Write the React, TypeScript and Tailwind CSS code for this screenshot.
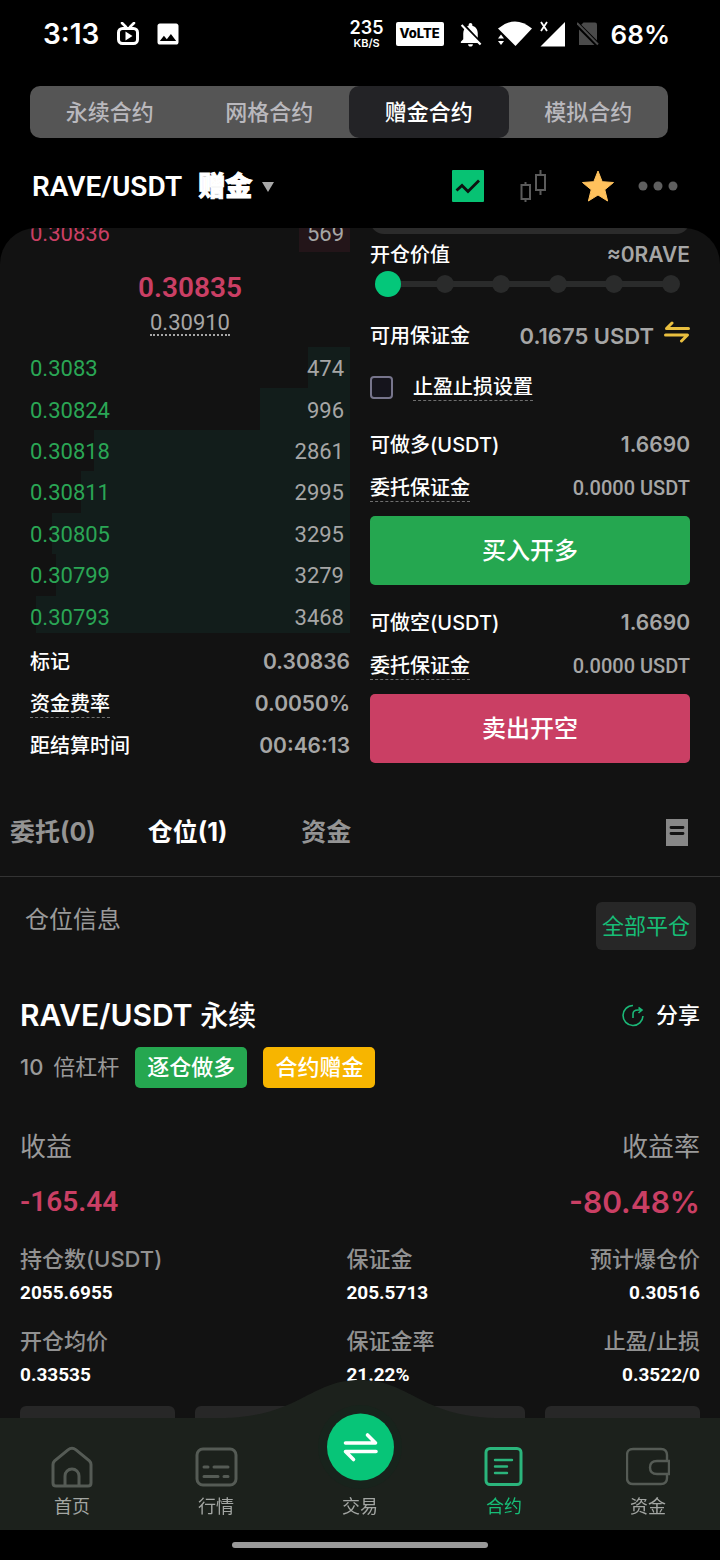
import { useState } from 'react';
import { clsx } from 'clsx';
import { MdImage, MdNotificationsOff } from 'react-icons/md';

const din = "[font-family:Roboto,'Noto_Sans_CJK_SC',sans-serif]";

const contractTypes = ['永续合约', '网格合约', '赠金合约', '模拟合约'];

const bids = [
  { price: '0.3083', amount: 474, depth: 13 },
  { price: '0.30824', amount: 996, depth: 28 },
  { price: '0.30818', amount: 2861, depth: 80 },
  { price: '0.30811', amount: 2995, depth: 84 },
  { price: '0.30805', amount: 3295, depth: 93 },
  { price: '0.30799', amount: 3279, depth: 92 },
  { price: '0.30793', amount: 3468, depth: 98 },
];

const positionDetails = [
  { label: '持仓数(USDT)', value: '2055.6955' },
  { label: '保证金', value: '205.5713' },
  { label: '预计爆仓价', value: '0.30516' },
  { label: '开仓均价', value: '0.33535' },
  { label: '保证金率', value: '21.22%' },
  { label: '止盈/止损', value: '0.3522/0' },
];

const positionActions = ['调整杠杆', '止盈止损', '平仓', '反手'];

const StatusBar = () => (
  <div className="flex h-[68px] shrink-0 items-center justify-between pr-[50px] pl-[43px] text-white">
    <div className="flex items-center gap-[18px]">
      <span className="text-[28px] font-semibold">3:13</span>
      <svg width="22" height="24" viewBox="0 0 22 24" fill="none">
        <rect x="1.5" y="6.5" width="19" height="15" rx="4" stroke="white" strokeWidth="3" />
        <path d="M5 1l4 4M17 1l-4 4" stroke="white" strokeWidth="2.6" strokeLinecap="round" />
        <path d="M8.5 9.5v9l7-4.5z" fill="white" />
      </svg>
      <MdImage className="-mx-[3px] size-[28px]" />
    </div>
    <div className="flex items-center gap-3">
      <div className="flex flex-col items-center">
        <span className="text-[18px] leading-[18px] font-semibold">235</span>
        <span className="text-[11px] leading-3 font-semibold">KB/S</span>
      </div>
      <span className="flex h-6 w-12 items-center justify-center rounded-[2px] bg-white text-[13px] font-extrabold text-black">
        VoLTE
      </span>
      <MdNotificationsOff className="size-[29px]" />
      <svg className="-mr-1" width="35" height="26" viewBox="0 0 35 26" fill="white">
        <path d="M1 7.500Q18-6.500 35 7.500L18.500 25z" />
        <path d="M1 17.500l3-4 3 4zM1 20l3 4 3-4z" />
      </svg>
      <svg width="25" height="26" viewBox="0 0 25 26">
        <path d="M25 1v24.500H0.500z" fill="white" />
        <path d="M1 1l6 9M7 1l-6 9" stroke="white" strokeWidth="1.800" />
      </svg>
      <svg width="22" height="26" viewBox="0 0 22 26">
        <path d="M6.500 1.500H18a2 2 0 0 1 2 2V24H2V6z" fill="#4b4b4b" />
        <path d="M0 3l22 22" stroke="black" strokeWidth="5" />
        <path d="M0 2l21 21.500" stroke="#4b4b4b" strokeWidth="2" />
      </svg>
      <span className="text-[26px] font-semibold">68%</span>
    </div>
  </div>
);

interface ContractTabsProps {
  active: string;
  onChange: (value: string) => void;
}
const ContractTabs = ({ active, onChange }: ContractTabsProps) => (
  <div className="mt-[18px] mr-[52px] ml-[30px] grid h-[52px] shrink-0 grid-cols-4 rounded-[10px] bg-[#555555]">
    {contractTypes.map((type) => (
      <button
        key={type}
        type="button"
        className={clsx(
          'rounded-[10px] text-[22px] font-medium',
          active === type ? 'bg-[#232326] text-white' : 'text-[#b9b8bd]'
        )}
        onClick={() => onChange(type)}
      >
        {type}
      </button>
    ))}
  </div>
);

const PairHeader = () => (
  <div className="mt-3 mb-1.5 flex h-[72px] shrink-0 items-center justify-between pr-[42px] pl-8">
    <button type="button" className={clsx('flex items-center pt-0.5 text-white', din)}>
      <span className="text-[28px] font-semibold">RAVE/USDT</span>
      <span className="ml-4 text-[27px] font-black [-webkit-text-stroke:1px_white]">赠金</span>
      <svg className="ml-2.5" width="12" height="10" viewBox="0 0 12 10">
        <path d="M0 0h12L6 10z" fill="#a8a8a8" />
      </svg>
    </button>
    <div className="flex items-center">
      <button type="button" aria-label="走势图">
        <svg width="32" height="32" viewBox="0 0 32 32" fill="none">
          <rect width="32" height="32" rx="1" fill="#07c273" />
          <path d="M4.500 20.500l5.500-5 6 6L27 10.500" stroke="#0d1210" strokeWidth="2.800" />
        </svg>
      </button>
      <button type="button" aria-label="K线" className="ml-9">
        <svg width="26" height="32" viewBox="0 0 26 32" fill="none" stroke="#5b5b5b" strokeWidth="2">
          <path d="M1.500 15h8.500v14H1.500zM5.500 12v3M5.500 29v3M16 5h9v15h-9zM20.500 0v5M20.500 20v5" />
        </svg>
      </button>
      <button type="button" aria-label="收藏" className="ml-9">
        <svg width="32" height="32" viewBox="0 0 32 32" fill="#ffc15c" stroke="#ffc15c">
          <path d="M16 1l4.200 10.700 11.300.8-8.700 7.200 2.800 11.300L16 25l-9.600 6 2.800-11.300L.5 12.500l11.300-.8z" />
        </svg>
      </button>
      <button type="button" aria-label="更多" className="ml-6">
        <svg width="40" height="10" viewBox="0 0 40 10" fill="#5f5f5f">
          <circle cx="5" cy="5" r="4.500" />
          <circle cx="20" cy="5" r="4.500" />
          <circle cx="35" cy="5" r="4.500" />
        </svg>
      </button>
    </div>
  </div>
);

interface InfoRowProps {
  label: string;
  value: string;
  underlined?: boolean;
}
const InfoRow = ({ label, value, underlined }: InfoRowProps) => (
  <div className="flex h-[42px] items-center justify-between text-[20px] font-semibold">
    <span
      className={clsx(
        'font-medium text-white',
        underlined && 'border-b border-dashed border-[#6f6f6f] leading-[26px]'
      )}
    >
      {label}
    </span>
    <span className="text-[21px] text-[#a6a6a6]">{value}</span>
  </div>
);

const OrderBook = () => (
  <div>
    <div className={din}>
      <div className="relative flex h-[41px] items-center justify-between pt-[3px] pr-1.5 text-[22px]">
        <div className="absolute inset-y-0 right-0 w-[16%] bg-[#231519]" />
        <span className="relative text-[#ca3f64]">0.30836</span>
        <span className="relative text-[#a6a6a6]">569</span>
      </div>
      <div className="flex h-[95px] flex-col items-center pt-[18px]">
        <span className="text-[28px] leading-9 font-semibold text-[#ca3f64]">0.30835</span>
        <span className="mt-1.5 border-b-2 border-dotted border-[#a6a6a6] text-[22px] leading-[22px] text-[#a6a6a6]">
          0.30910
        </span>
      </div>
      <ul className="grid h-[290px] grid-rows-7 text-[22px]">
        {bids.map((bid) => (
          <li
            key={bid.price}
            className="group relative flex items-center justify-between pt-0.5 pr-1.5"
          >
            <div
              className="absolute inset-y-0 right-0 bg-[#121d1b] group-last:bottom-1"
              style={{ width: `${bid.depth}%` }}
            />
            <span className="relative text-[#2aa655]">{bid.price}</span>
            <span className="relative text-[#a6a6a6]">{bid.amount}</span>
          </li>
        ))}
      </ul>
    </div>
    <div className="pt-1">
      <InfoRow label="标记" value="0.30836" />
      <InfoRow label="资金费率" value="0.0050%" underlined />
      <InfoRow label="距结算时间" value="00:46:13" />
    </div>
  </div>
);

interface OrderSideProps {
  label: string;
  button: string;
  className: string;
}
const OrderSide = ({ label, button, className }: OrderSideProps) => (
  <div className="mt-[17px]">
    <InfoRow label={label} value="1.6690" />
    <div className="flex h-[44px] items-center justify-between text-[20px] font-medium">
      <span className="border-b border-dashed border-[#6f6f6f] leading-[26px] text-white">
        委托保证金
      </span>
      <span className={clsx('text-[#a6a6a6]', din)}>0.0000 USDT</span>
    </div>
    <button
      type="button"
      className={clsx('mt-1.5 h-[69px] w-full rounded-[5px] text-[24px] font-medium text-white', className)}
    >
      {button}
    </button>
  </div>
);

const OrderForm = () => {
  const [percent, setPercent] = useState(0);
  const [stopEnabled, setStopEnabled] = useState(false);

  return (
    <div>
      <div className="h-[23px] rounded-b-[14px] bg-[#2b2b2b]" />
      <div className="flex h-[42px] items-center justify-between text-[20px]">
        <label htmlFor="percent" className="font-medium text-white">
          开仓价值
        </label>
        <span className="text-[21px] font-semibold text-[#a6a6a6]">≈0RAVE</span>
      </div>
      <div className="mr-1.5 ml-[5px] grid h-4 grid-rows-[16px] items-center">
        <div className="col-start-1 row-start-1 mx-[13px] h-1.5 bg-[#2a2b2b]" />
        <div className="col-start-1 row-start-1 flex justify-between px-1">
          {[0, 20, 40, 60, 80, 100].map((step) => (
            <span key={step} className="size-[18px] rounded-full bg-[#2a2b2b]" />
          ))}
        </div>
        <input
          id="percent"
          type="range"
          value={percent}
          onChange={(e) => {
            setPercent(Number(e.target.value));
          }}
          className="relative col-start-1 row-start-1 h-[26px] w-full appearance-none bg-transparent [&::-webkit-slider-thumb]:size-[26px] [&::-webkit-slider-thumb]:appearance-none [&::-webkit-slider-thumb]:rounded-full [&::-webkit-slider-thumb]:bg-[#04c77a]"
        />
      </div>
      <div className="mt-6 flex h-10 items-center justify-between text-[20px]">
        <span className="font-medium text-white">可用保证金</span>
        <div className="flex items-center gap-2.5 text-[22px] font-semibold text-[#a6a6a6]">
          0.1675 USDT
          <button type="button" aria-label="划转" className="-mt-2">
            <svg width="26" height="22" viewBox="0 0 26 22" fill="none" stroke="#e9bf3f" strokeWidth="3">
              <path d="M24.500 7.500H2.500L8 2M1.500 14h22L17.500 20" strokeLinecap="round" strokeLinejoin="round" />
            </svg>
          </button>
        </div>
      </div>
      <label className="mt-[11px] flex h-10 items-center text-[20px] font-medium text-white">
        <input
          type="checkbox"
          checked={stopEnabled}
          onChange={() => {
            setStopEnabled(!stopEnabled);
          }}
          className="size-[23px] appearance-none rounded-[4px] border-2 border-[#77758c] bg-[#15141c] checked:bg-[#04c77a]"
        />
        <span className="ml-5 border-b border-dashed border-[#6f6f6f] leading-[26px]">
          止盈止损设置
        </span>
      </label>
      <OrderSide label="可做多(USDT)" button="买入开多" className="bg-[#25a750]" />
      <OrderSide label="可做空(USDT)" button="卖出开空" className="bg-[#ca3f64]" />
    </div>
  );
};

const PositionTabs = () => (
  <div className="mt-[22px] flex h-[88px] items-center justify-between border-b border-[#333333] pr-8 pl-2.5 text-[25px] font-bold text-[#949494]">
    <div className="flex items-center">
      <button type="button">委托(0)</button>
      <button type="button" className="ml-[52px] text-white">
        仓位(1)
      </button>
      <button type="button" className="ml-[74px]">
        资金
      </button>
    </div>
    <button type="button" aria-label="历史记录">
      <svg width="22" height="27" viewBox="0 0 22 27">
        <rect width="22" height="27" fill="#878787" />
        <path d="M5 8.500h12M5 14.500h12" stroke="#121212" strokeWidth="2.800" strokeLinecap="round" />
      </svg>
    </button>
  </div>
);

const Position = () => (
  <section>
    <div className="flex items-start justify-between pt-[25px] pr-6 pl-[25px]">
      <h2 className="text-[24px] leading-9 text-[#9a9a9a]">仓位信息</h2>
      <button type="button" className="h-12 rounded-md bg-[#272727] px-1.5 text-[22px] text-[#17bd77]">
        全部平仓
      </button>
    </div>
    <div className="px-5">
      <div className="mt-[45px] flex h-10 items-center justify-between text-white">
        <h3 className="text-[30px] font-semibold">
          RAVE/USDT <span className="text-[28px] font-medium">永续</span>
        </h3>
        <button type="button" className="flex items-center gap-3 text-[22px] font-medium">
          <svg width="22" height="23" viewBox="0 0 22 23" fill="none" stroke="#1bb777" strokeWidth="1.600">
            <path d="M11 1.500A10 10 0 1 0 21 12M11 14v-4q0-4 5-4h4M16.500 3.500L20 6l-3.500 3" />
          </svg>
          分享
        </button>
      </div>
      <div className="mt-3 flex h-[41px] items-center gap-4 text-[22px] font-medium text-[#9a9a9a]">
        <span className="flex gap-2.5">
          <span>10</span>
          <span className="font-normal">倍杠杆</span>
        </span>
        <span className="flex h-full items-center rounded-[5px] bg-[#25a750] px-3 text-white">
          逐仓做多
        </span>
        <span className="flex h-full items-center rounded-[5px] bg-[#f7b500] px-3 text-white">
          合约赠金
        </span>
      </div>
      <div className="mt-[38px] flex h-10 items-center justify-between text-[26px] text-[#9a9a9a]">
        <span>收益</span>
        <span>收益率</span>
      </div>
      <div className="mt-4 flex h-10 items-center justify-between text-[28px] font-semibold text-[#ca3f64]">
        <span className={din}>-165.44</span>
        <span className="text-[30px]">-80.48%</span>
      </div>
      <dl className="mt-5 grid grid-cols-[48%_1fr_1fr] gap-y-3.5">
        {positionDetails.map((item) => (
          <div key={item.label} className="nth-[3n]:text-right">
            <dt className="text-[22px] leading-[34px] font-medium whitespace-nowrap text-[#919191]">
              {item.label}
            </dt>
            <dd className={clsx('text-[19px] leading-[34px] font-bold text-white', din)}>
              {item.value}
            </dd>
          </div>
        ))}
      </dl>
      <div className="mt-3.5 grid grid-cols-4 gap-5">
        {positionActions.map((action) => (
          <button
            key={action}
            type="button"
            aria-label={action}
            className="h-14 rounded-md bg-[#272727]"
          />
        ))}
      </div>
    </div>
  </section>
);

const navItems = [
  {
    label: '首页',
    icon: (
      <path d="M3 18.500q0-2.200 1.600-3.700L18 3.800q4-3.200 8 0l13.400 11Q41 16.300 41 18.500V37q0 3-3 3H6q-3 0-3-3zM15 40V30a7 7 0 0 1 14 0v10" />
    ),
  },
  {
    label: '行情',
    icon: (
      <>
        <rect x="3" y="3" width="39" height="36" rx="6" />
        <path d="M10 21h4M20 21h14M10 30.500h14M30 30.500h4" strokeLinecap="round" />
      </>
    ),
  },
  { label: '交易', icon: null },
  {
    label: '合约',
    icon: (
      <>
        <rect x="4" y="2.500" width="35" height="36" rx="4" />
        <path d="M13 14h17M13 20.500h12M13 27h12" strokeWidth="2.400" strokeLinecap="round" />
      </>
    ),
  },
  {
    label: '资金',
    icon: (
      <path
        d="M41 14V9q0-6-6-6H7Q1 3 1 9v23q0 6 6 6h28q6 0 6-6v-5M43 15H31q-7 0-7 6.500t7 6.500h12z"
        strokeWidth="2.400"
      />
    ),
  },
];

const BottomNav = () => (
  <nav className="relative h-28 shrink-0 bg-[#1c211c]">
    <svg
      className="absolute bottom-full left-1/2 -translate-x-1/2"
      width="270"
      height="38"
      viewBox="0 0 270 38"
      fill="#1c211c"
    >
      <path d="M0 38C75 36 85 0 135 0S195 36 270 38z" />
    </svg>
    <div className="grid h-full grid-cols-5">
      {navItems.map((item) => (
        <a
          key={item.label}
          href="#"
          className={clsx(
            'relative flex flex-col items-center justify-end pb-2.5 text-[18px] leading-[26px]',
            item.label === '合约' ? 'text-[#17bd77]' : 'text-[#a3a6a3]'
          )}
        >
          {item.icon ? (
            <svg
              className={clsx('mb-1.5', item.label === '合约' ? 'text-[#2bb57c]' : 'text-[#555b55]')}
              width="44"
              height="42"
              viewBox="0 0 44 42"
              fill="none"
              stroke="currentColor"
              strokeWidth="3"
            >
              {item.icon}
            </svg>
          ) : (
            <svg
              className="absolute -top-[13px] left-1/2 -translate-x-1/2"
              width="84"
              height="84"
              viewBox="0 0 84 84"
              fill="none"
            >
              <circle cx="42" cy="42" r="42" fill="#18231c" />
              <circle cx="42.500" cy="42" r="33.500" fill="#07c578" />
              <path
                d="M27.500 38h30l-8-8M58 46.500H27.500l8 8"
                stroke="white"
                strokeWidth="3.600"
                strokeLinecap="round"
                strokeLinejoin="round"
              />
            </svg>
          )}
          {item.label}
        </a>
      ))}
    </div>
  </nav>
);

const App = () => {
  const [contractType, setContractType] = useState('赠金合约');

  return (
    <div className="flex h-screen flex-col bg-black [font-family:Inter,'Noto_Sans_CJK_SC',sans-serif]">
      <StatusBar />
      <ContractTabs active={contractType} onChange={setContractType} />
      <PairHeader />
      <main className="min-h-0 flex-1 overflow-x-hidden overflow-y-auto rounded-t-[36px] bg-[#121212] [scrollbar-width:none]">
        <div className="-mt-[17px] grid grid-cols-2 gap-5 px-[30px]">
          <OrderBook />
          <OrderForm />
        </div>
        <PositionTabs />
        <Position />
      </main>
      <BottomNav />
      <div className="flex h-[30px] shrink-0 items-center justify-center bg-black">
        <div className="h-1.5 w-64 rounded-full bg-[#999999]" />
      </div>
    </div>
  );
};
export default App;
